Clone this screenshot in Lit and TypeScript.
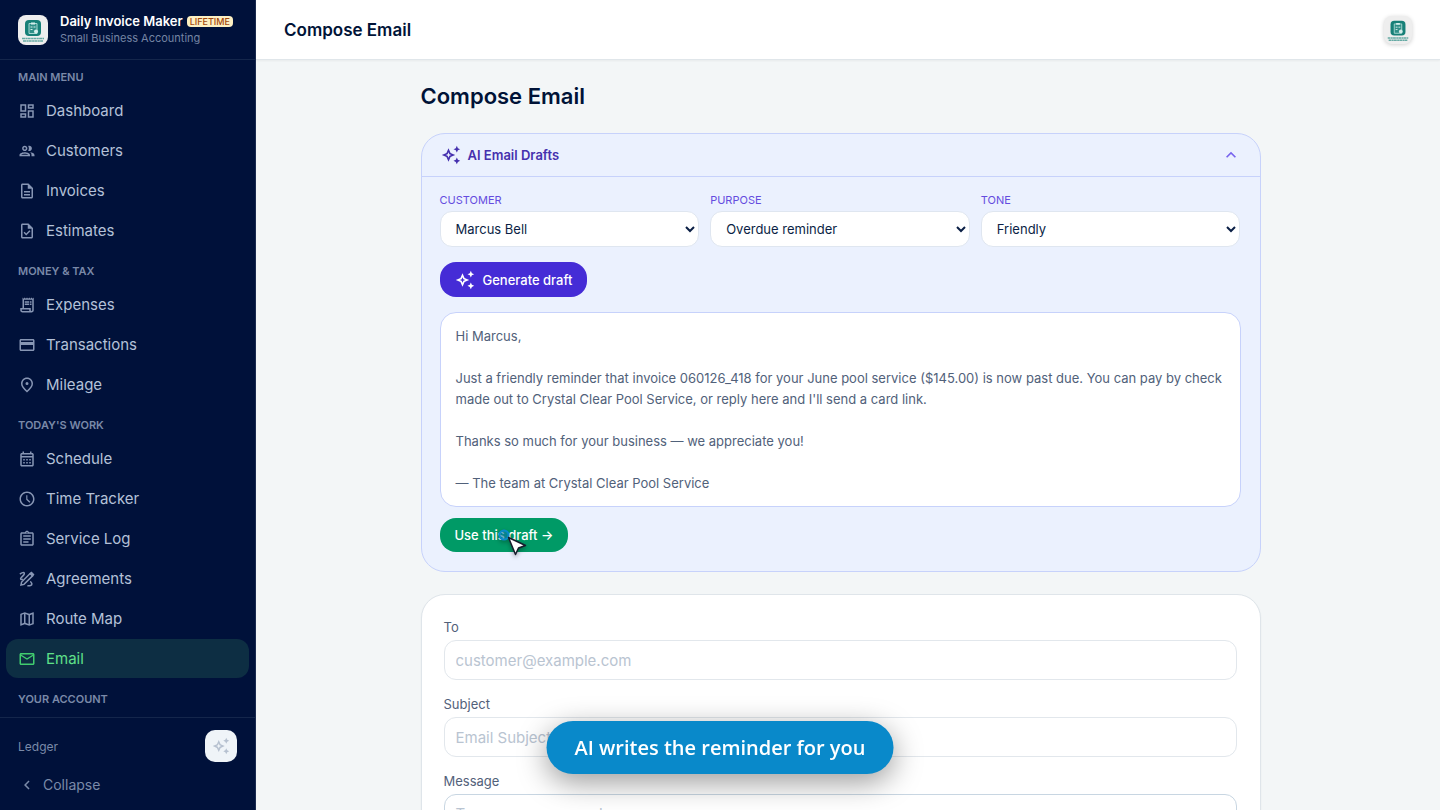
import { LitElement, html, css, svg } from "lit";
import { customElement, property } from "lit/decorators.js";

const ICONS: Record<string, string> = {
  dashboard: "M19 5v2h-4V5h4M9 5v6H5V5h4m10 8v6h-4v-6h4M9 17v2H5v-2h4M21 3h-8v6h8V3zM11 3H3v10h8V3zm10 8h-8v10h8V11zm-10 4H3v6h8v-6z",
  people: "M9 13.75c-2.34 0-7 1.17-7 3.5V19h14v-1.75c0-2.33-4.66-3.5-7-3.5zM4.34 17c.84-.58 2.87-1.25 4.66-1.25s3.82.67 4.66 1.25H4.34zM9 12c1.93 0 3.5-1.57 3.5-3.5S10.93 5 9 5 5.5 6.57 5.5 8.5 7.07 12 9 12zm0-5c.83 0 1.5.67 1.5 1.5S9.83 10 9 10s-1.5-.67-1.5-1.5S8.17 7 9 7zm7.04 6.81c1.16.84 1.96 1.96 1.96 3.44V19h4v-1.75c0-2.02-3.5-3.17-5.96-3.44zM15 12c1.93 0 3.5-1.57 3.5-3.5S16.93 5 15 5c-.54 0-1.04.13-1.5.35.63.89 1 1.98 1 3.15s-.37 2.26-1 3.15c.46.22.96.35 1.5.35z",
  doc: "M8 16h8v2H8zm0-4h8v2H8zm6-10H6c-1.1 0-2 .9-2 2v16c0 1.1.89 2 1.99 2H18c1.1 0 2-.9 2-2V8l-6-6zm4 18H6V4h7v5h5v11z",
  task: "M14 2H6c-1.1 0-2 .9-2 2v16c0 1.1.89 2 1.99 2H18c1.1 0 2-.9 2-2V8l-6-6zm4 18H6V4h7v5h5v11zM8.82 13.05 7.4 14.46 10.94 18l5.66-5.66-1.41-1.41-4.24 4.24-2.13-2.12z",
  receipt: "M19.5 3.5 18 2l-1.5 1.5L15 2l-1.5 1.5L12 2l-1.5 1.5L9 2 7.5 3.5 6 2v14H3v3c0 1.66 1.34 3 3 3h12c1.66 0 3-1.34 3-3V2l-1.5 1.5zM15 20H6c-.55 0-1-.45-1-1v-1h10v2zm4-1c0 .55-.45 1-1 1s-1-.45-1-1v-3H8V5h11v14zM9 7h6v2H9zm7 0h2v2h-2zM9 10h6v2H9zm7 0h2v2h-2z",
  card: "M20 4H4c-1.11 0-1.99.89-1.99 2L2 18c0 1.11.89 2 2 2h16c1.11 0 2-.89 2-2V6c0-1.11-.89-2-2-2zm0 14H4v-6h16v6zm0-10H4V6h16v2z",
  pin: "M12 2C7.6 2 4 5.5 4 10.2c0 3.200 2.700 7 8 11.800 5.300-4.800 8-8.600 8-11.800C20 5.500 16.400 2 12 2zm0 17.300c-4-3.800-6-6.800-6-9.100C6 6.600 8.700 4 12 4s6 2.600 6 6.200c0 2.300-2 5.300-6 9.100zM12 8a2 2 0 1 0 0 4 2 2 0 0 0 0-4z",
  calendar: "M19 4h-1V2h-2v2H8V2H6v2H5c-1.11 0-1.99.9-1.99 2L3 20c0 1.1.89 2 2 2h14c1.1 0 2-.9 2-2V6c0-1.1-.9-2-2-2zm0 16H5V10h14v10zm0-12H5V6h14v2zM9 14H7v-2h2v2zm4 0h-2v-2h2v2zm4 0h-2v-2h2v2zm-8 4H7v-2h2v2zm4 0h-2v-2h2v2zm4 0h-2v-2h2v2z",
  clock: "M11.99 2C6.47 2 2 6.48 2 12s4.47 10 9.99 10C17.52 22 22 17.52 22 12S17.52 2 11.99 2zM12 20c-4.42 0-8-3.58-8-8s3.58-8 8-8 8 3.58 8 8-3.58 8-8 8zm.5-13H11v6l4.250 4 1.250-1.230-4-3.770z",
  clipboard: "M7 15h7v2H7zm0-4h10v2H7zm0-4h10v2H7zm12-4h-4.18C14.4 1.84 13.3 1 12 1c-1.3 0-2.4.84-2.82 2H5c-1.1 0-2 .9-2 2v14c0 1.100.9 2 2 2h14c1.1 0 2-.9 2-2V5c0-1.1-.9-2-2-2zm-7-.25c.41 0 .75.34.75.75s-.34.75-.75.75-.75-.34-.75-.75.34-.75.75-.75zM19 19H5V5h14v14z",
  map: "M20.5 3l-.16.03L15 5.1 9 3 3.36 4.9c-.21.07-.36.25-.36.48V20.5c0 .28.22.5.5.5l.16-.03L9 18.9l6 2.1 5.64-1.9c.21-.07.36-.25.36-.48V3.5c0-.28-.22-.5-.5-.5zM10 5.47l4 1.4v11.66l-4-1.4V5.47zm-5 .99l3-1.01v11.7l-3 1.16V6.46zm14 11.08l-3 1.01V6.86l3-1.16v11.84z",
  mail: "M22 6c0-1.1-.9-2-2-2H4c-1.1 0-2 .9-2 2v12c0 1.1.9 2 2 2h16c1.1 0 2-.9 2-2V6zm-2 0l-8 5-8-5h16zm0 12H4V8l8 5 8-5v10z",
  sparkle: "M19 9l1.25-2.75L23 5l-2.75-1.25L19 1l-1.25 2.75L15 5l2.75 1.25zm0 6l-1.25 2.75L15 19l2.75 1.25L19 23l1.25-2.75L23 19l-2.75-1.25zM11.5 9.5L9 4 6.5 9.5 1 12l5.5 2.5L9 20l2.5-5.5L17 12l-5.5-2.5zm-1.51 3.49L9 15.17l-.99-2.18L5.83 12l2.18-.99L9 8.83l.99 2.18 2.18.99-2.18.99z",
  up: "M12 8l-6 6 1.41 1.41L12 10.830l4.590 4.580L18 14z",
  left: "M15.410 7.410L14 6l-6 6 6 6 1.410-1.410L10.830 12z",
};

@customElement("ui-icon")
class UiIcon extends LitElement {
  @property() name = "";
  static styles = css`
    :host { display: inline-flex; flex: none; width: 18px; height: 18px; }
    svg { width: 100%; height: 100%; }
  `;
  render() {
    const body =
      this.name === "sign"
        ? svg`<g fill="none" stroke="currentColor" stroke-width="2"><path d="M2.500 5.500C5 3.500 8 2.500 8.500 4.500S5.500 8.500 4 10.500s.5 3 2.500 1.500"/><path d="M4 20l.8-4L16.500 4.300l3.200 3.200L8 19.200z"/><path d="M12.500 21c3 .5 6-.5 6-2.500s-2-2-1.500-3.500"/></g><path d="M15 5l3-3 4 4-3 3z" fill="currentColor"/>`
        : svg`<path d=${ICONS[this.name] ?? ""} fill="currentColor"/>`;
    return html`<svg viewBox="0 0 24 24" aria-hidden="true">${body}</svg>`;
  }
}

@customElement("brand-mark")
class BrandMark extends LitElement {
  static styles = css`
    :host { display: block; flex: none; width: 30px; height: 30px; border-radius: 8px; overflow: hidden; background: #eeeeee; }
    svg { display: block; width: 100%; height: 100%; }
  `;
  render() {
    return html`<svg viewBox="0 0 30 30" aria-hidden="true">
      <rect x="7" y="5" width="16" height="16" rx="4" fill="#178078" />
      <path d="M11 8.500h8v10h-8z" fill="#2f8f88" stroke="#a9d8d2" stroke-width="1" />
      <path d="M13 7.500h4v2h-4z" fill="#d5eeeb" />
      <path d="M12.500 12h2M12.500 14.500h2M15.500 12h2" stroke="#d5eeeb" />
      <circle cx="18" cy="16.500" r="2" fill="#d5eeeb" />
      <path d="M4 23.500h22M5 26h20" stroke="#65aaa4" stroke-width="1.500" stroke-dasharray="3 .4 2 .3" />
    </svg>`;
  }
}

interface NavItem { icon: string; label: string; active?: boolean }
const NAV: { title: string; items: NavItem[] }[] = [
  { title: "Main Menu", items: [
    { icon: "dashboard", label: "Dashboard" }, { icon: "people", label: "Customers" },
    { icon: "doc", label: "Invoices" }, { icon: "task", label: "Estimates" } ] },
  { title: "Money & Tax", items: [
    { icon: "receipt", label: "Expenses" }, { icon: "card", label: "Transactions" }, { icon: "pin", label: "Mileage" } ] },
  { title: "Today's Work", items: [
    { icon: "calendar", label: "Schedule" }, { icon: "clock", label: "Time Tracker" }, { icon: "clipboard", label: "Service Log" },
    { icon: "sign", label: "Agreements" }, { icon: "map", label: "Route Map" }, { icon: "mail", label: "Email", active: true } ] },
  { title: "Your Account", items: [] },
];

@customElement("side-bar")
class SideBar extends LitElement {
  static styles = css`
    :host { display: flex; flex-direction: column; width: 256px; box-sizing: border-box; flex: none; background: #00113a; color: #b4c1d8; border-right: 1px solid #1b2b50; }
    .brand { display: flex; align-items: center; gap: 12px; height: 59px; padding: 0 18px; border-bottom: 1px solid #14264b; }
    .name { display: flex; align-items: center; gap: 4px; font-size: 13px; line-height: 17px; font-weight: 600; color: #fff; white-space: nowrap; }
    .plan { font-size: 9px; line-height: 11px; font-weight: 500; color: #a3480d; background: #fdf0c3; border-radius: 4px; padding: 0 3px; }
    .tag { font-size: 11px; line-height: 16px; color: #7484a3; }
    nav { flex: 1; min-height: 0; overflow: hidden; }
    h2 { margin: 0; padding: 10px 18px 4px; font-size: 11px; line-height: 20px; font-weight: 600; text-transform: uppercase; color: #7a89a8; }
    h2:first-child { padding-top: 7px; }
    ul { margin: 0; padding: 0 6px; list-style: none; }
    .link { display: flex; align-items: center; gap: 10px; height: 39px; margin-bottom: 1px; padding: 0 12px; border-radius: 12px; font-size: 15px; line-height: 20px; color: inherit; text-decoration: none; }
    .link ui-icon { color: #8796b4; }
    .active { background: #0d2e43; color: #5fe089; }
    .active ui-icon { color: #41cc6f; }
    .foot { height: 92px; border-top: 1px solid #14264b; color: #7a8aa8; font-size: 12px; }
    .row { display: flex; align-items: center; justify-content: space-between; padding: 12px 18px 0; }
    button { font: inherit; border: 0; padding: 0; cursor: pointer; }
    .spark { display: grid; place-items: center; width: 32px; height: 32px; border-radius: 10px; background: #eff4f8; color: #b6c1d0; }
    .collapse { display: flex; align-items: center; gap: 7px; margin: 14px 18px 0; background: none; color: inherit; font-size: 14px; line-height: 18px; }
  `;
  render() {
    return html`
      <div class="brand">
        <brand-mark></brand-mark>
        <div>
          <div class="name">Daily Invoice Maker <span class="plan">LIFETIME</span></div>
          <div class="tag">Small Business Accounting</div>
        </div>
      </div>
      <nav aria-label="Main">
        ${NAV.map((g) => html`<h2>${g.title}</h2>
          <ul>${g.items.map((i) => html`<li><a class="link ${i.active ? "active" : ""}" href="#"><ui-icon name=${i.icon}></ui-icon>${i.label}</a></li>`)}</ul>`)}
      </nav>
      <div class="foot">
        <div class="row"><span>Ledger</span><button class="spark" aria-label="Assistant"><ui-icon name="sparkle"></ui-icon></button></div>
        <button class="collapse"><ui-icon name="left"></ui-icon>Collapse</button>
      </div>`;
  }
}

const DRAFT = `Hi Marcus,

Just a friendly reminder that invoice 060126_418 for your June pool service ($145.00) is now past due. You can pay by check made out to Crystal Clear Pool Service, or reply here and I'll send a card link.

Thanks so much for your business — we appreciate you!

— The team at Crystal Clear Pool Service`;

const CHOICES = [
  { id: "customer", label: "Customer", value: "Marcus Bell" },
  { id: "purpose", label: "Purpose", value: "Overdue reminder" },
  { id: "tone", label: "Tone", value: "Friendly" },
];

@customElement("app-root")
class AppRoot extends LitElement {
  static styles = css`
    :host { display: flex; height: 100vh; overflow: hidden; font-family: Inter, "Open Sans", sans-serif; color: #001337; background: #f3f6f7; }
    * { box-sizing: border-box; }
    .main { flex: 1; min-width: 0; display: flex; flex-direction: column; }
    header { display: flex; align-items: center; justify-content: space-between; flex: none; height: 60px; padding: 0 28px; background: #fff; border-bottom: 1px solid #e0e6ea; box-shadow: 0 1px 2px #0000000d; }
    header h2 { margin: 0; font-size: 17px; line-height: 24px; font-weight: 600; }
    header brand-mark { width: 28px; height: 28px; box-shadow: 0 1px 4px #00000030; }
    .scroll { flex: 1; min-height: 0; overflow: hidden; padding: 20px 39px 0 24px; }
    .col { max-width: 840px; margin: 0 auto; }
    h1 { margin: 0 0 21px; font-size: 22px; line-height: 32px; font-weight: 600; }
    button, select, input, textarea { font: inherit; }
    .ai { border: 1px solid #c7d2fb; border-radius: 24px; background: #ebf1fe; }
    .toggle { display: flex; align-items: center; gap: 7px; width: 100%; height: 43px; padding: 0 19px; border: 0; border-bottom: 1px solid #c7d2fb; background: none; color: #4530ae; font-size: 13px; font-weight: 600; }
    .toggle ui-icon, .generate ui-icon { width: 20px; height: 20px; }
    .toggle .chev { margin-left: auto; color: #7763ee; }
    .body { padding: 16px 19px 19px 18px; }
    .choices { display: grid; grid-template-columns: repeat(3, 1fr); gap: 11px; }
    .choices label { display: block; margin-bottom: 4px; font-size: 11px; line-height: 14px; text-transform: uppercase; color: #654cdf; }
    select { display: block; width: 100%; height: 36px; padding: 0 0 0 11px; border: 1px solid #dfe6f0; border-radius: 12px; background: #fff; color: #0b1f45; font-size: 13px; }
    .pill { display: flex; align-items: center; gap: 8px; height: 35px; padding: 0 15px; border: 0; border-radius: 16px; color: #fff; font-size: 13px; font-weight: 500; }
    .generate { margin: 15px 0; background: #452cd6; }
    .draft { padding: 13px 15px 12px; border: 1px solid #c7d2fb; border-radius: 16px; background: #fff; color: #51617a; font-size: 13px; line-height: 21px; white-space: pre-wrap; }
    .usewrap { position: relative; width: max-content; margin-top: 11px; }
    .use { height: 34px; background: #009a66; }
    .cursor { position: absolute; left: 56px; top: 10px; width: 34px; height: 34px; overflow: visible; pointer-events: none; filter: drop-shadow(0 2px 2px #0005); }
    .form { margin-top: 22px; padding: 23px 23px 0 22px; border: 1px solid #dfe5ea; border-radius: 24px 24px 0 0; background: #fff; box-shadow: 0 1px 2px #0000000d; }
    .form label { display: block; margin-bottom: 4px; font-size: 13px; line-height: 18px; color: #52617a; }
    .form input, .form textarea { display: block; width: 100%; height: 40px; margin-bottom: 15px; padding: 0 11px; border: 1px solid #e2e7ec; border-radius: 12px; background: #fff; color: #001337; font-size: 15px; }
    .form textarea { height: 200px; padding: 9px 11px; resize: none; border-color: #c8d6e2; }
    ::placeholder { color: #b9c4d1; opacity: 1; }
    .toast { position: fixed; left: 50%; bottom: 36px; transform: translateX(-50%); padding: 12px 28px; border-radius: 27px; background: #0989ca; color: #fff; box-shadow: 0 8px 30px #00000066; font-family: "Open Sans", "Noto Sans", sans-serif; font-size: 20px; line-height: 29px; font-weight: 600; white-space: nowrap; }
  `;
  render() {
    return html`
      <side-bar></side-bar>
      <div class="main">
        <header><h2>Compose Email</h2><brand-mark></brand-mark></header>
        <main class="scroll"><div class="col">
          <h1>Compose Email</h1>
          <section class="ai">
            <button class="toggle" aria-expanded="true"><ui-icon name="sparkle"></ui-icon>AI Email Drafts<ui-icon class="chev" name="up"></ui-icon></button>
            <div class="body">
              <div class="choices">
                ${CHOICES.map((c) => html`<div><label for=${c.id}>${c.label}</label><select id=${c.id}><option>${c.value}</option></select></div>`)}
              </div>
              <button class="pill generate"><ui-icon name="sparkle"></ui-icon>Generate draft</button>
              <div class="draft">${DRAFT}</div>
              <div class="usewrap">
                <button class="pill use">Use this draft →</button>
                <svg class="cursor" viewBox="0 0 34 34" aria-hidden="true">
                  <circle cx="8" cy="7" r="4.500" fill="#0989ca" fill-opacity=".5" stroke="#0989ca" stroke-width="2" />
                  <path d="M12.500 9.500L19.500 26.500 22.500 20 29.500 17.500z" fill="#fff" stroke="#161c2c" stroke-width="1.500" stroke-linejoin="round" />
                </svg>
              </div>
            </div>
          </section>
          <form class="form">
            <label for="to">To</label><input id="to" type="email" placeholder="customer@example.com" />
            <label for="subject">Subject</label><input id="subject" placeholder="Email Subject" />
            <label for="message">Message</label><textarea id="message" placeholder="Type your message here..."></textarea>
          </form>
        </div></main>
      </div>
      <div class="toast" role="status">AI writes the reminder for you</div>`;
  }
}
